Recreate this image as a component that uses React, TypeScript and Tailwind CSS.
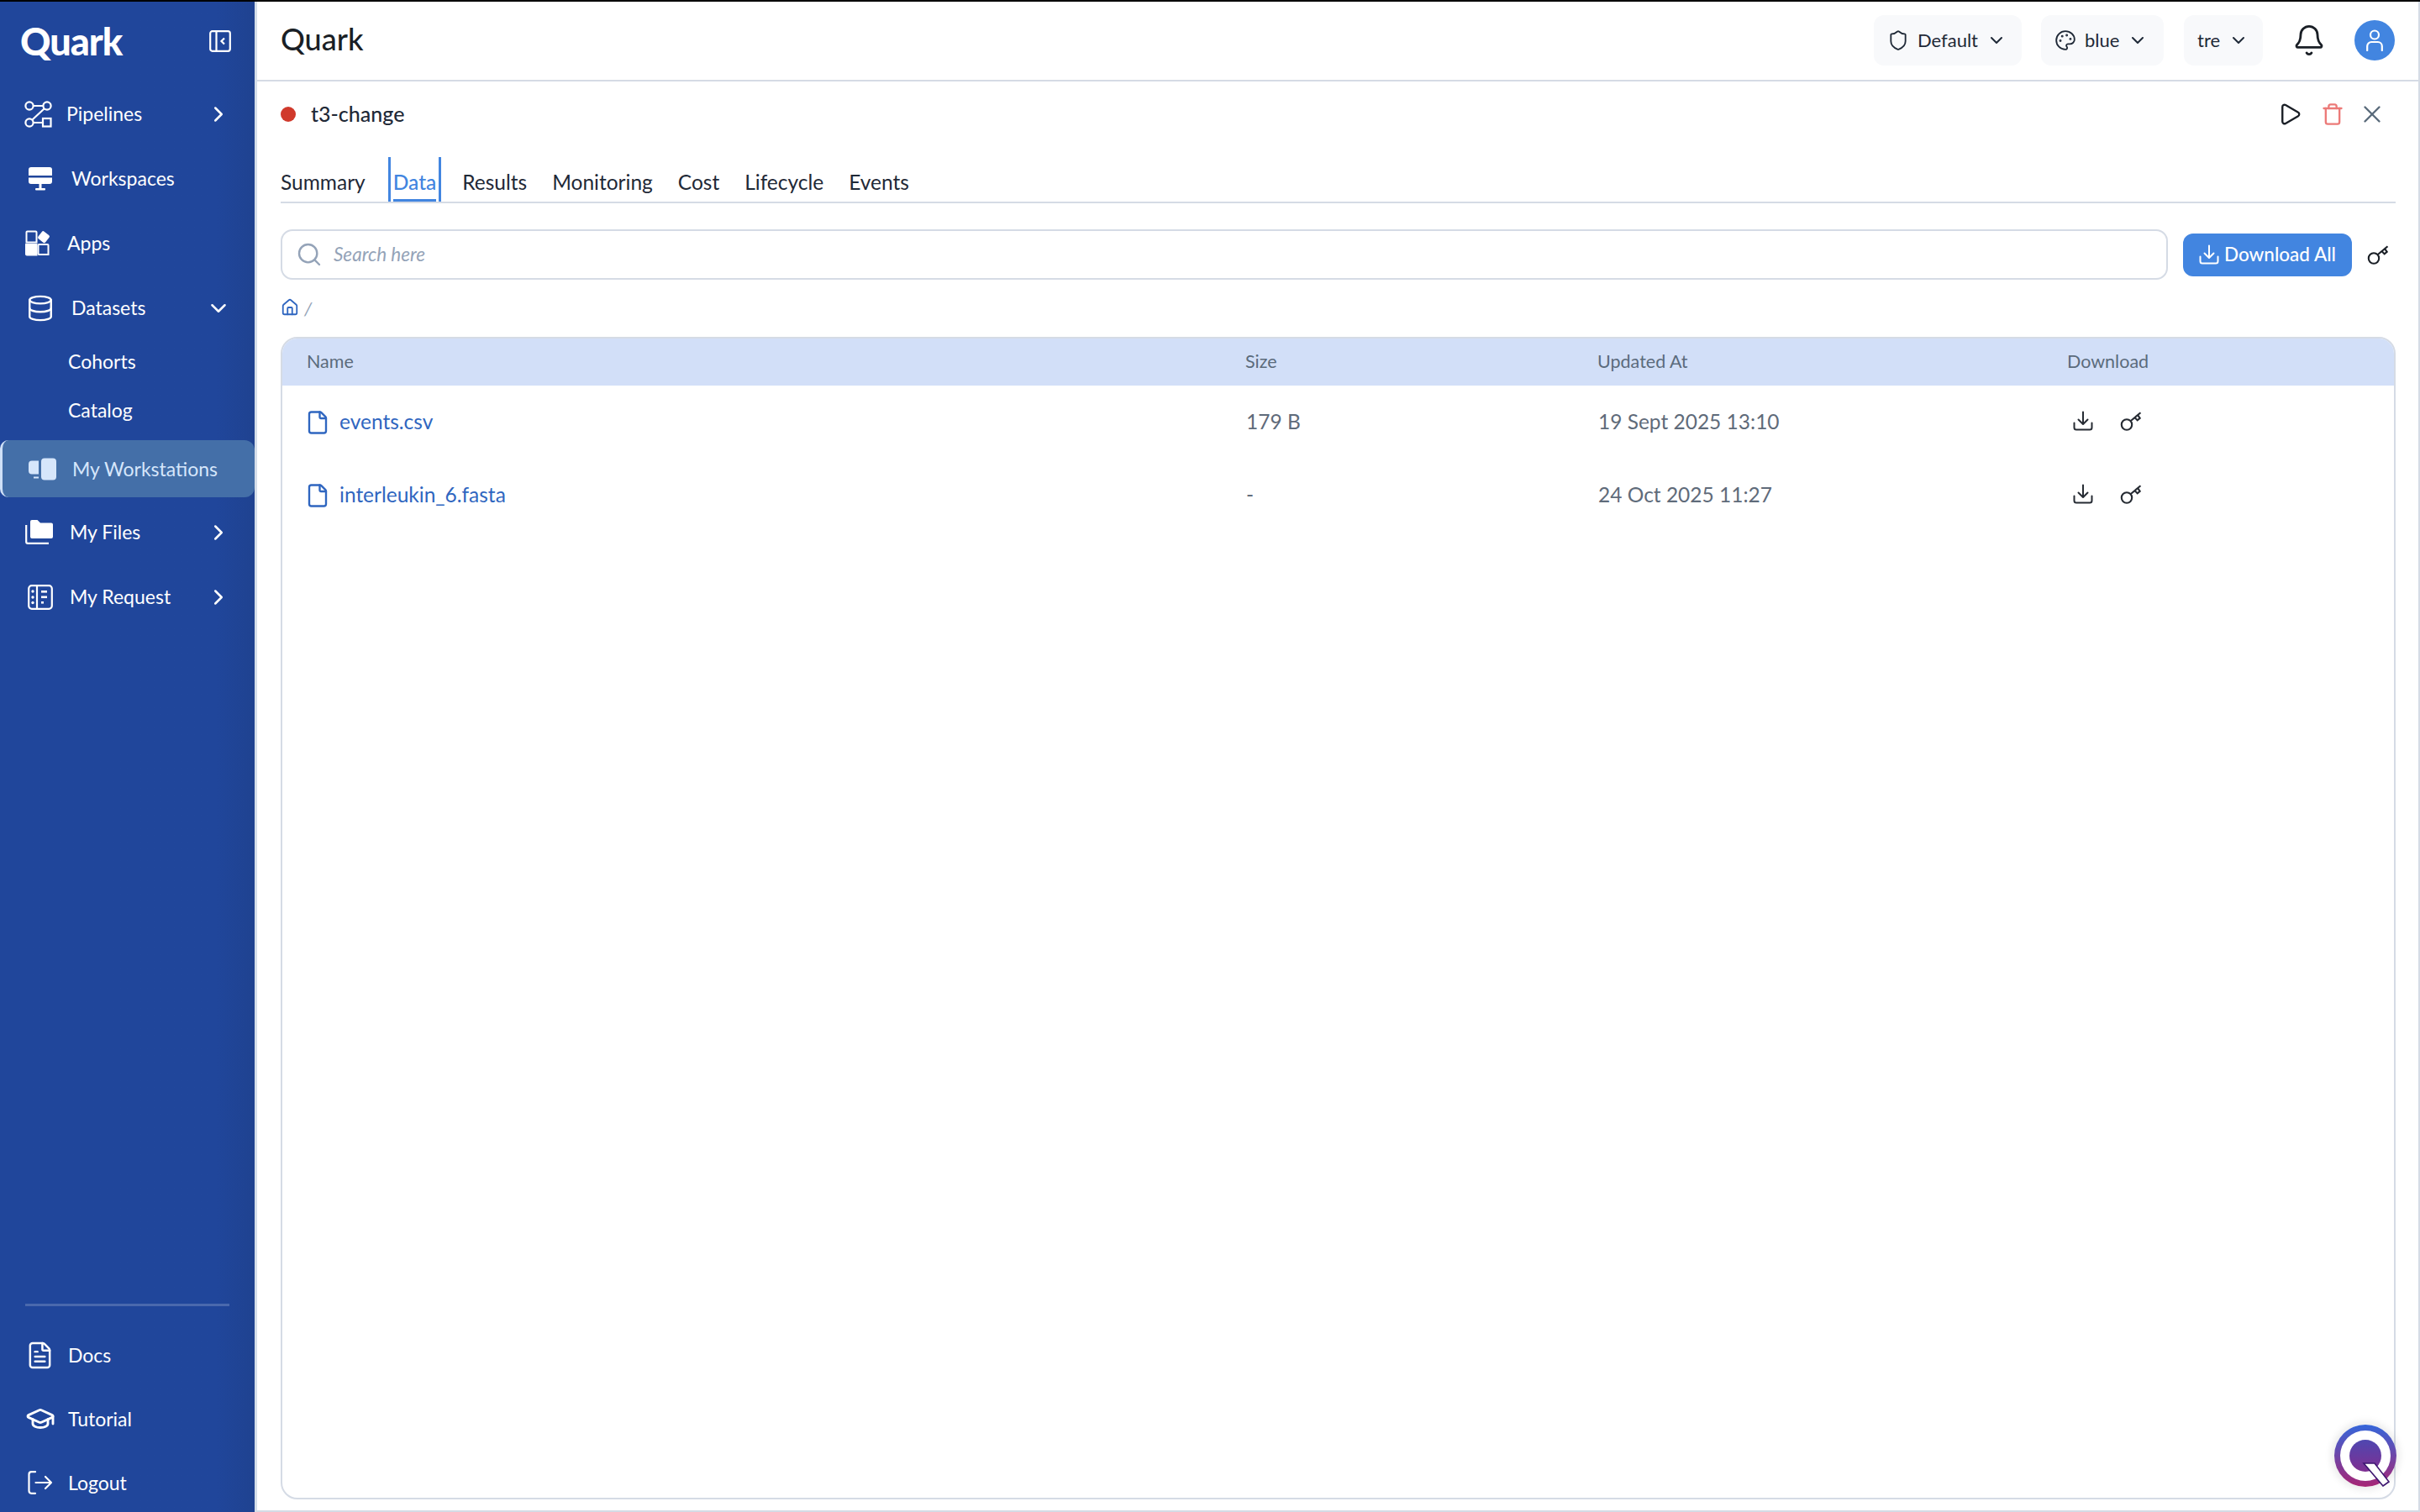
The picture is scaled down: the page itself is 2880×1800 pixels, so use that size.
import { ChevronDown, ChevronRight, Database, FileText, GraduationCap, Shield, Palette, Bell, Play, Trash, X, Search, File, House } from 'lucide-react';

const FONT = "font-['Lato','Noto_Sans',sans-serif]";

function PipelinesIcon() {
  return (
    <svg width="33" height="32" viewBox="0 0 33 32" fill="none" stroke="currentColor" strokeWidth="2.2">
      <circle cx="6" cy="6" r="4.6" />
      <circle cx="27" cy="6" r="4.6" />
      <circle cx="6" cy="26" r="4.6" />
      <rect x="22" y="21" width="9.5" height="9.5" />
      <path d="M10.6 6h11.8M23.5 9.5 9.5 22.5M10.6 26H22" />
    </svg>
  );
}

function MonitorIcon() {
  return (
    <svg width="28" height="28" viewBox="0 0 28 28" fill="currentColor">
      <path d="M3 0h22a3 3 0 0 1 3 3v7H0V3a3 3 0 0 1 3-3Z" />
      <path d="M0 12.5h28V17a3 3 0 0 1-3 3H3a3 3 0 0 1-3-3Z" />
      <rect x="12.5" y="20" width="3" height="6" />
      <rect x="8" y="25" width="12" height="2.6" rx="1" />
    </svg>
  );
}

function AppsIcon() {
  return (
    <svg width="31" height="31" viewBox="0 0 31 31">
      <path d="M2.5 1.5h10a1 1 0 0 1 1 1v12h-12v-12a1 1 0 0 1 1-1Z" fill="none" stroke="currentColor" strokeWidth="2" />
      <path d="M0 16h14.5v14.5H2a2 2 0 0 1-2-2Z" fill="currentColor" />
      <path d="M16.5 17h10a1 1 0 0 1 1 1v11h-11a1 1 0 0 1-1-1v-10a1 1 0 0 1 1-1Z" fill="none" stroke="currentColor" strokeWidth="2" />
      <rect x="16.6" y="2.6" width="11" height="11" rx="2" transform="rotate(38 22 8)" fill="currentColor" />
    </svg>
  );
}

function WorkstationIcon() {
  return (
    <svg width="33" height="27" viewBox="0 0 33 27" fill="currentColor">
      <rect x="15" y="0.5" width="18" height="26" rx="4" />
      <path d="M4 3.5h8v16H4a4 4 0 0 1-4-4v-8a4 4 0 0 1 4-4Z" />
      <rect x="6" y="22.5" width="6" height="2" />
    </svg>
  );
}

function FilesIcon() {
  return (
    <svg width="33" height="29" viewBox="0 0 33 29" fill="none">
      <path d="M6 2a2 2 0 0 1 2-2h6.5l3.5 3.5h13a2 2 0 0 1 2 2V20a2 2 0 0 1-2 2H8a2 2 0 0 1-2-2Z" fill="currentColor" />
      <path d="M1.2 6v20a1.8 1.8 0 0 0 1.8 1.8h25" stroke="currentColor" strokeWidth="2.2" />
    </svg>
  );
}

function RequestIcon() {
  return (
    <svg width="30" height="30" viewBox="0 0 30 30" fill="none" stroke="currentColor" strokeWidth="2.2">
      <rect x="1.2" y="1.2" width="27.6" height="27.6" rx="3.5" />
      <path d="M11 1.2v27.6" />
      <g fill="currentColor" stroke="none">
        <circle cx="6" cy="8" r="1.7" />
        <circle cx="6" cy="15" r="1.7" />
        <circle cx="6" cy="21.5" r="1.7" />
        <rect x="16" y="7" width="7" height="2.6" />
        <rect x="16" y="13.5" width="7" height="2.6" />
        <rect x="16" y="20" width="3" height="2.6" />
      </g>
    </svg>
  );
}

function CollapseIcon() {
  return (
    <svg width="26" height="26" viewBox="0 0 26 26" fill="none" stroke="currentColor" strokeWidth="2.2">
      <rect x="1.2" y="1.2" width="23.6" height="23.6" rx="2.5" />
      <path d="M8.5 1.2v23.6M18 9.5 14.5 13l3.5 3.5" />
    </svg>
  );
}

function LogoutIcon() {
  return (
    <svg width="30" height="28" viewBox="0 0 30 28" fill="none" stroke="currentColor" strokeWidth="2.2" strokeLinecap="round" strokeLinejoin="round">
      <path d="M9 1.2H4.5a3 3 0 0 0-3 3v19.6a3 3 0 0 0 3 3H9" />
      <path d="M9.5 14h18.5M21 7l7 7-7 7" />
    </svg>
  );
}

function KeyIcon({ size = 26 }: { size?: number }) {
  return (
    <svg width={size} height={size} viewBox="0 0 26 26" fill="none" stroke="currentColor" strokeWidth="2.1">
      <circle cx="8" cy="17.5" r="6.2" />
      <path d="M12.5 13.2 24.5 3.2" />
      <path d="m17.5 9 3.2 3.4 3-2.6-2.6-3.6" />
    </svg>
  );
}

function TrayIcon({ size = 24 }: { size?: number }) {
  return (
    <svg width={size} height={size} viewBox="0 0 24 24" fill="none" stroke="currentColor" strokeWidth="2" strokeLinecap="round" strokeLinejoin="round">
      <path d="M1.5 14.5v5.5a2.5 2.5 0 0 0 2.5 2.5h16a2.5 2.5 0 0 0 2.5-2.5v-5.5" />
      <path d="M12 1.5v14M6.5 10.5l5.5 5.5 5.5-5.5" />
    </svg>
  );
}

function PersonIcon() {
  return (
    <svg width="20" height="26" viewBox="0 0 20 26" fill="none" stroke="currentColor" strokeWidth="2.2" strokeLinecap="round">
      <circle cx="10" cy="6.5" r="5" />
      <path d="M1.2 25v-5a5 5 0 0 1 5-5h7.6a5 5 0 0 1 5 5v5" />
    </svg>
  );
}

function QBadge() {
  return (
    <svg width="74" height="74" viewBox="0 0 74 74">
      <defs>
        <linearGradient id="qb" x1="0" y1="0" x2="0" y2="1">
          <stop offset="0" stopColor="#3566da" />
          <stop offset="1" stopColor="#a72575" />
        </linearGradient>
        <linearGradient id="qi" x1="0" y1="0" x2="0" y2="1">
          <stop offset="0" stopColor="#4f47b0" />
          <stop offset="1" stopColor="#7f2f92" />
        </linearGradient>
      </defs>
      <circle cx="37" cy="37" r="37" fill="url(#qb)" />
      <circle cx="37" cy="37" r="30" fill="#fff" />
      <circle cx="37" cy="37" r="19" fill="url(#qi)" />
      <path d="M35 46h13l17 22-7 5Z" fill="#fff" stroke="#3d1670" strokeWidth="1.6" />
    </svg>
  );
}

function NavRow({
  icon,
  label,
  pad,
  gap,
  chevron,
}: {
  icon: React.ReactNode;
  label: string;
  pad: string;
  gap: string;
  chevron?: 'right' | 'down';
}) {
  return (
    <div className={`flex h-[77px] items-center text-[23px] text-white ${pad} ${gap}`}>
      {icon}
      <span className="flex-1">{label}</span>
      {chevron === 'right' && <ChevronRight className="mr-[28px] h-[30px] w-[30px]" strokeWidth={2} />}
      {chevron === 'down' && <ChevronDown className="mr-[28px] h-[30px] w-[30px]" strokeWidth={2} />}
    </div>
  );
}

function Sidebar() {
  return (
    <aside className="flex h-full w-[303px] shrink-0 flex-col overflow-hidden bg-gradient-to-r from-[#20469b] from-85% to-[#1f4290]">
      <div className="flex h-[95px] items-center justify-between pb-[1px] pl-[24px] pr-[28px]">
        <span className="text-[45px] font-black leading-none tracking-[-1px] text-white">Quark</span>
        <span className="text-white">
          <CollapseIcon />
        </span>
      </div>
      <NavRow icon={<PipelinesIcon />} label="Pipelines" pad="pl-[29px]" gap="gap-[17px]" chevron="right" />
      <NavRow icon={<MonitorIcon />} label="Workspaces" pad="pl-[34px]" gap="gap-[23px]" />
      <NavRow icon={<AppsIcon />} label="Apps" pad="pl-[30px]" gap="gap-[19px]" />
      <NavRow
        icon={<Database className="h-[34px] w-[34px]" strokeWidth={1.7} />}
        label="Datasets"
        pad="pl-[31px]"
        gap="gap-[20px]"
        chevron="down"
      />
      <div className="-mt-[4px] flex h-[58px] items-center pl-[81px] text-[23px] text-white">Cohorts</div>
      <div className="flex h-[58px] items-center pl-[81px] text-[23px] text-white">Catalog</div>
      <div className="mb-[3px] mt-[7px] flex h-[68px] items-center gap-[19px] rounded-r-[12px] rounded-l-[10px] border-l-[3px] border-[#cfe0f7] bg-[#446fa8] pl-[31px] text-[23px] text-[#d6e6fb]">
        <WorkstationIcon />
        <span>My Workstations</span>
      </div>
      <NavRow icon={<FilesIcon />} label="My Files" pad="pl-[30px]" gap="gap-[20px]" chevron="right" />
      <NavRow icon={<RequestIcon />} label="My Request" pad="pl-[33px]" gap="gap-[20px]" chevron="right" />
      <div className="mt-auto h-[248px]">
        <div className="mx-[30px] h-[3px] bg-[#4a69ad]" />
        <div className="mt-[20px] flex h-[76px] items-center gap-[16px] pl-[30px] text-[23px] text-white">
          <FileText className="h-[35px] w-[35px]" strokeWidth={1.7} />
          <span>Docs</span>
        </div>
        <div className="flex h-[76px] items-center gap-[15px] pl-[30px] text-[23px] text-white">
          <GraduationCap className="h-[36px] w-[36px]" strokeWidth={1.9} />
          <span>Tutorial</span>
        </div>
        <div className="flex h-[73px] items-center gap-[18px] pl-[33px] pt-[3px] text-[23px] text-white">
          <LogoutIcon />
          <span>Logout</span>
        </div>
      </div>
    </aside>
  );
}

function HeaderSelect({ icon, label, width }: { icon?: React.ReactNode; label: string; width: string }) {
  return (
    <div className={`flex h-[60px] items-center gap-[10px] rounded-[12px] bg-[#f8f9fb] pl-[16px] text-[22px] text-[#1f2937] ${width}`}>
      {icon}
      <span>{label}</span>
      <ChevronDown className="h-[24px] w-[24px]" strokeWidth={2} />
    </div>
  );
}

function Tab({ label, active }: { label: string; active?: boolean }) {
  if (active) {
    return (
      <div className="-ml-[3px] -mr-[5px] flex h-[53px] items-end border-x-[3px] border-[#4285e0] px-[3px] text-[24.5px] font-medium text-[#4285e0]">
        <span className="block h-[38px] border-b-[3px] border-[#4285e0] leading-[30px]">{label}</span>
      </div>
    );
  }
  return (
    <div className="flex h-[53px] items-end text-[24.5px] text-[#1f2937]">
      <span className="block h-[38px] leading-[30px]">{label}</span>
    </div>
  );
}

function FileRow({ name, size, updated }: { name: string; size: string; updated: string }) {
  return (
    <div className="grid h-[87px] grid-cols-[1117px_419px_559px_1fr] items-center pl-[30px] text-[24.5px] text-[#5f6b7a]">
      <div className="flex items-center gap-[11px] text-[#2f66c0]">
        <File className="-ml-[3px] h-[30px] w-[30px]" strokeWidth={1.9} />
        <span>{name}</span>
      </div>
      <span>{size}</span>
      <span>{updated}</span>
      <div className="flex items-center gap-[32px] pb-[3px] pl-[6px] text-[#262b33]">
        <TrayIcon />
        <KeyIcon />
      </div>
    </div>
  );
}

export default function App() {
  return (
    <div className={`flex h-screen w-screen flex-col overflow-hidden bg-white ${FONT}`}>
      <div className="h-[2px] shrink-0 bg-black" />
      <div className="flex min-h-0 flex-1">
        <Sidebar />
        <main className="relative flex min-w-0 flex-1 flex-col border-x-[3px] border-b-[2px] border-x-[#d5dee9] border-b-[#d5dbe5] border-r-[#d5dbe5] [border-left-width:3px] [border-right-width:2px]">
          <header className="flex h-[95px] shrink-0 items-center border-b-[2px] border-[#d5dbe5] pb-[2px] pl-[28px] pr-[28px]">
            <h1 className="flex-1 pb-[3px] text-[36px] font-medium leading-none text-[#1a1f26]">Quark</h1>
            <div className="flex items-center">
              <HeaderSelect icon={<Shield className="h-[26px] w-[26px]" strokeWidth={1.7} />} label="Default" width="w-[176px]" />
              <HeaderSelect icon={<Palette className="h-[26px] w-[26px]" strokeWidth={1.7} />} label="blue" width="ml-[23px] w-[146px]" />
              <HeaderSelect label="tre" width="ml-[24px] w-[94px]" />
              <Bell className="ml-[35px] h-[40px] w-[40px] text-[#1a1f26]" strokeWidth={1.7} />
              <div className="ml-[34px] flex h-[48px] w-[48px] items-center justify-center rounded-full bg-[#4285e0] text-white">
                <PersonIcon />
              </div>
            </div>
          </header>
          <div className="flex min-h-0 flex-1 flex-col pl-[28px] pr-[27px]">
            <div className="flex h-[90px] shrink-0 items-center pb-[12px]">
              <span className="h-[18px] w-[18px] rounded-full bg-[#d0392b]" />
              <span className="ml-[18px] flex-1 text-[25px] font-medium text-[#1f2937]">t3-change</span>
              <Play className="h-[30px] w-[30px] text-[#1a1f26]" strokeWidth={1.9} />
              <Trash className="ml-[22px] h-[28px] w-[28px] text-[#ec7a78]" strokeWidth={2} />
              <X className="ml-[16px] mr-[11px] h-[34px] w-[34px] text-[#5a6b7b]" strokeWidth={1.7} />
            </div>
            <div className="flex h-[55px] shrink-0 gap-[30px] border-b-[2px] border-[#d5dbe5]">
              {['Summary', 'Data', 'Results', 'Monitoring', 'Cost', 'Lifecycle', 'Events'].map((t) => (
                <Tab key={t} label={t} active={t === 'Data'} />
              ))}
            </div>
            <div className="mt-[31px] flex shrink-0 items-center">
              <div className="flex h-[60px] flex-1 items-center gap-[13px] rounded-[14px] border-[2px] border-[#d5dbe5] pl-[16px] text-[#94a3b8]">
                <Search className="h-[32px] w-[32px]" strokeWidth={1.8} />
                <span className="text-[22.5px] italic">Search here</span>
              </div>
              <button className="ml-[18px] flex h-[51px] w-[201px] items-center justify-center gap-[6px] rounded-[12px] bg-[#4285e0] text-[22.5px] font-medium text-white">
                <TrayIcon size={24} />
                Download All
              </button>
              <span className="ml-[18px] mr-[8px] text-[#1a1f26]">
                <KeyIcon />
              </span>
            </div>
            <div className="mt-[21px] flex h-[24px] shrink-0 items-center gap-[6px] text-[22px] text-[#94a3b8]">
              <House className="h-[22px] w-[22px] text-[#2f66c0]" strokeWidth={2} />
              <span className="italic">/</span>
            </div>
            <div className="mb-[13px] mt-[23px] min-h-0 flex-1 overflow-hidden rounded-[20px] border-[2px] border-[#d5dbe5]">
              <div className="grid h-[56px] grid-cols-[1117px_419px_559px_1fr] items-center bg-[#d2dff8] pb-[2px] pl-[29px] text-[21.5px] text-[#5b6b7c]">
                <span>Name</span>
                <span>Size</span>
                <span>Updated At</span>
                <span>Download</span>
              </div>
              <FileRow name="events.csv" size="179 B" updated="19 Sept 2025 13:10" />
              <FileRow name="interleukin_6.fasta" size="-" updated="24 Oct 2025 11:27" />
            </div>
          </div>
          <div className="absolute bottom-[28px] right-[26px] rounded-full shadow-[0_0_8px_4px_rgba(0,0,0,0.08)]">
            <QBadge />
          </div>
        </main>
      </div>
    </div>
  );
}
